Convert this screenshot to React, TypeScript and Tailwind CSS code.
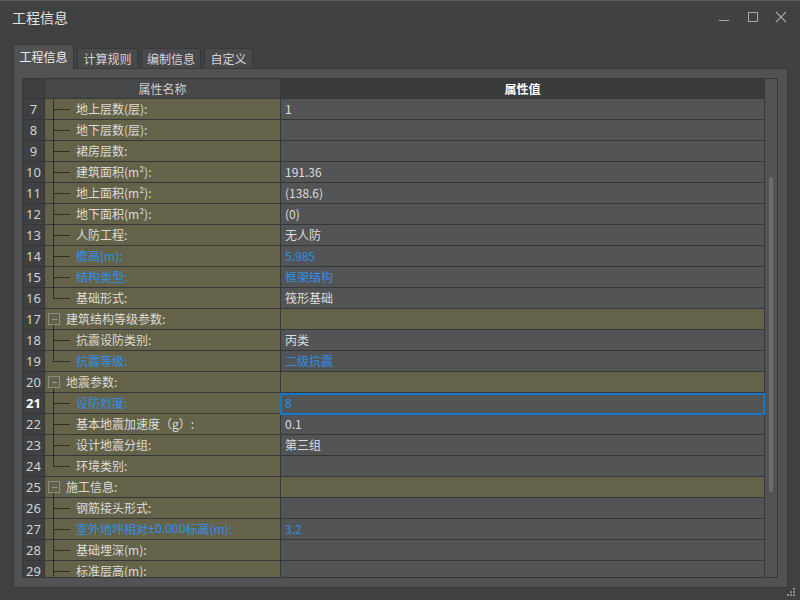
import React from "react";

type Row = {
  n: number;
  name: React.ReactNode;
  value?: string;
  blue?: boolean;
  kind: "full" | "end" | "group";
  selected?: boolean;
};

const rows: Row[] = [
  { n: 7, name: "地上层数(层):", value: "1", kind: "full" },
  { n: 8, name: "地下层数(层):", kind: "full" },
  { n: 9, name: "裙房层数:", kind: "full" },
  { n: 10, name: "建筑面积(m²):", value: "191.36", kind: "full" },
  { n: 11, name: "地上面积(m²):", value: "(138.6)", kind: "full" },
  { n: 12, name: "地下面积(m²):", value: "(0)", kind: "full" },
  { n: 13, name: "人防工程:", value: "无人防", kind: "full" },
  { n: 14, name: "檐高(m):", value: "5.985", blue: true, kind: "full" },
  { n: 15, name: "结构类型:", value: "框架结构", blue: true, kind: "full" },
  { n: 16, name: "基础形式:", value: "筏形基础", kind: "end" },
  { n: 17, name: "建筑结构等级参数:", kind: "group" },
  { n: 18, name: "抗震设防类别:", value: "丙类", kind: "full" },
  { n: 19, name: "抗震等级:", value: "二级抗震", blue: true, kind: "end" },
  { n: 20, name: "地震参数:", kind: "group" },
  { n: 21, name: "设防烈度:", value: "8", blue: true, kind: "full", selected: true },
  { n: 22, name: "基本地震加速度（g）:", value: "0.1", kind: "full" },
  { n: 23, name: "设计地震分组:", value: "第三组", kind: "full" },
  { n: 24, name: "环境类别:", kind: "end" },
  { n: 25, name: "施工信息:", kind: "group" },
  { n: 26, name: "钢筋接头形式:", kind: "full" },
  {
    n: 27,
    name: (
      <>
        室外地坪相对
        <span style={{ fontFamily: '"Noto Sans", sans-serif' }}>±0.000</span>
        标高(m):
      </>
    ),
    value: "3.2",
    blue: true,
    kind: "full",
  },
  { n: 28, name: "基础埋深(m):", kind: "full" },
  { n: 29, name: "标准层高(m):", kind: "full" },
];

const font = { fontFamily: '"Noto Sans CJK SC", "Noto Sans", sans-serif' };

function TreeCell({ r }: { r: Row }) {
  const isGroup = r.kind === "group";
  return (
    <div className="relative w-[236px] h-full border-r border-[#36373a] bg-[#64634a] shrink-0">
      {isGroup ? (
        <>
          <div className="absolute left-[3px] top-[4px] w-[12px] h-[12px] border border-[#8c8c84] flex items-center justify-center">
            <div className="w-[5px] h-px bg-[#9c9c94]" />
          </div>
          <div className="absolute left-[8px] top-[16px] bottom-0 w-px bg-[#2e2e2b]" />
        </>
      ) : (
        <>
          <div
            className={
              r.kind === "end"
                ? "absolute left-[8px] top-0 h-[11px] w-px bg-[#2e2e2b]"
                : "absolute left-[8px] top-0 bottom-0 w-px bg-[#2e2e2b]"
            }
          />
          <div className="absolute left-[8px] top-[10px] w-[17px] h-px bg-[#2e2e2b]" />
        </>
      )}
      <div
        className={
          (isGroup ? "pl-[21px] " : "pl-[31px] ") +
          "h-full flex items-center text-[12px] leading-none whitespace-nowrap " +
          (r.blue ? "text-[#2d8fee]" : "text-[#dcdcd8]")
        }
      >
        {r.name}
      </div>
    </div>
  );
}

export default function App() {
  return (
    <div
      className="relative w-[800px] h-[600px] bg-[#404241] border-t border-[#5a5b5c] overflow-hidden select-none"
      style={font}
    >
      {/* Title bar */}
      <div className="h-[31px] flex items-center">
        <div className="ml-[12px] text-[14px] text-[#e4e4e4] leading-none">工程信息</div>
        <div className="ml-auto flex items-center">
          <svg width="12" height="12" className="mr-[17px]" viewBox="0 0 12 12">
            <line x1="1" y1="9.5" x2="11" y2="9.5" stroke="#a8a8a8" strokeWidth="1" />
          </svg>
          <svg width="12" height="12" className="mr-[16px]" viewBox="0 0 12 12">
            <rect x="1.5" y="1.5" width="9" height="9" fill="none" stroke="#a8a8a8" strokeWidth="1" />
          </svg>
          <svg width="12" height="12" className="mr-[13px]" viewBox="0 0 12 12">
            <line x1="1" y1="1" x2="11" y2="11" stroke="#a8a8a8" strokeWidth="1.1" />
            <line x1="11" y1="1" x2="1" y2="11" stroke="#a8a8a8" strokeWidth="1.1" />
          </svg>
        </div>
      </div>

      {/* Tabs */}
      <div className="mt-[12px] ml-[13px] flex items-end h-[24px] gap-[3px] relative z-10">
        <div className="w-[61px] h-[25px] -mb-px bg-[#515254] border border-b-0 border-[#38393b] rounded-t-[2px] flex items-center justify-center text-[12px] text-[#eeeeee] leading-none">
          工程信息
        </div>
        <div className="w-[61px] h-[20px] bg-[#48494b] border border-b-0 border-[#38393b] rounded-t-[2px] flex items-center justify-center text-[12px] text-[#d4d4d4] leading-none">
          计算规则
        </div>
        <div className="w-[60px] h-[20px] bg-[#48494b] border border-b-0 border-[#38393b] rounded-t-[2px] flex items-center justify-center text-[12px] text-[#d4d4d4] leading-none">
          编制信息
        </div>
        <div className="w-[49px] h-[20px] bg-[#48494b] border border-b-0 border-[#38393b] rounded-t-[2px] flex items-center justify-center text-[12px] text-[#d4d4d4] leading-none">
          自定义
        </div>
      </div>

      {/* Panel */}
      <div className="ml-[13px] w-[775px] bg-[#515254] border border-[#38393b] pt-[9px] pl-[8px] pr-[9px] pb-[9px]">
        <div className="w-[756px] h-[500px] border border-[#36373a] flex overflow-hidden">
          {/* table */}
          <div className="w-[742px] flex flex-col">
            {/* header */}
            <div className="h-[20px] flex border-b border-[#36373a] shrink-0">
              <div className="w-[22px] border-r border-[#36373a] bg-[#3e3f41]" />
              <div className="w-[236px] border-r border-[#36373a] bg-[#464749] flex items-center justify-center text-[12px] text-[#cfcfcf] leading-none">
                属性名称
              </div>
              <div className="w-[484px] border-r border-[#36373a] bg-[#3a3b3d] flex items-center justify-center text-[12px] font-bold text-white leading-none">
                属性值
              </div>
            </div>
            {/* rows */}
            <div className="flex-1 overflow-hidden">
              {rows.map((r) => (
                <div key={r.n} className="h-[21px] flex border-b border-[#36373a]">
                  <div
                    className={
                      "w-[22px] shrink-0 border-r border-[#36373a] bg-[#3e4042] flex items-center justify-center text-[13px] leading-none " +
                      (r.selected ? "font-bold text-white" : "text-[#d2d2d2]")
                    }
                    style={{ fontFamily: '"Noto Sans", sans-serif' }}
                  >
                    {r.n}
                  </div>
                  <TreeCell r={r} />
                  <div
                    className={
                      "relative w-[484px] shrink-0 border-r border-[#36373a] flex items-center pl-[4px] text-[12px] leading-none " +
                      (r.kind === "group" ? "bg-[#64634a] " : "bg-[#535456] ") +
                      (r.blue ? "text-[#2d8fee]" : "text-[#dcdcdc]")
                    }
                  >
                    {r.value ?? ""}
                    {r.selected && (
                      <div className="absolute z-10 left-[-1px] right-[-1px] top-0 bottom-[-2px] border-2 border-[#1677c9]" />
                    )}
                  </div>
                </div>
              ))}
            </div>
          </div>
          {/* scrollbar */}
          <div className="w-[12px] bg-[#525355]">
            <div className="mt-[98px] ml-[4px] w-[4px] h-[315px] rounded-full bg-[#6c6d6f]" />
          </div>
        </div>
      </div>

      {/* resize grip */}
      <svg className="absolute right-[4px] bottom-[3px]" width="10" height="10" viewBox="0 0 10 10">
        <rect x="7" y="1" width="2" height="2" fill="#8a8a8a" />
        <rect x="4" y="4" width="2" height="2" fill="#8a8a8a" />
        <rect x="7" y="4" width="2" height="2" fill="#8a8a8a" />
        <rect x="1" y="7" width="2" height="2" fill="#8a8a8a" />
        <rect x="4" y="7" width="2" height="2" fill="#8a8a8a" />
        <rect x="7" y="7" width="2" height="2" fill="#8a8a8a" />
      </svg>
    </div>
  );
}
